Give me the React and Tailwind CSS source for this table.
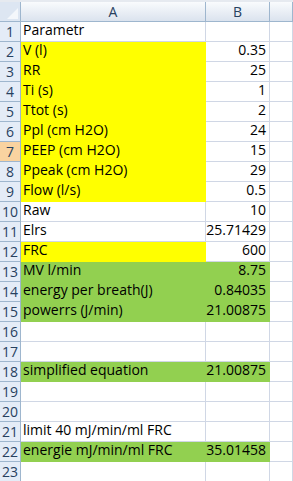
import React from "react";

const Y = "#ffff00";
const G = "#92d050";

const rows = [
  ["Parametr", "", null, null],
  ["V (l)", "0.35", Y, null],
  ["RR", "25", Y, null],
  ["Ti (s)", "1", Y, null],
  ["Ttot (s)", "2", Y, null],
  ["Ppl (cm H2O)", "24", Y, null],
  ["PEEP (cm H2O)", "15", Y, null],
  ["Ppeak (cm H2O)", "29", Y, null],
  ["Flow (l/s)", "0.5", Y, null],
  ["Raw", "10", null, null],
  ["Elrs", "25.71429", null, null],
  ["FRC", "600", Y, null],
  ["MV l/min", "8.75", G, G],
  ["energy per breath(J)", "0.84035", G, G],
  ["powerrs (J/min)", "21.00875", G, G],
  ["", "", null, null],
  ["", "", null, null],
  ["simplified equation", "21.00875", G, G],
  ["", "", null, null],
  ["", "", null, null],
  ["limit 40 mJ/min/ml FRC", "", null, null],
  ["energie mJ/min/ml FRC", "35.01458", G, G],
  ["", "", null, null],
];

function Cell({ text, fill, right, nextFill }) {
  const style = fill
    ? { backgroundColor: fill, borderColor: fill }
    : {};
  return (
    <div
      className={`h-[20px] border-r border-b border-[#d0d7e5] flex items-end pb-[1px] overflow-visible whitespace-nowrap ${
        right ? "justify-end pr-[3px]" : "pl-[2px]"
      }`}
      style={style}
    >
      {text}
    </div>
  );
}

export default function App() {
  return (
    <div
      className="w-[293px] h-[481px] overflow-hidden bg-white text-[14px] text-black"
      style={{ fontFamily: '"Open Sans", "Liberation Sans", sans-serif' }}
    >
      <div className="h-[2px] bg-[#e6eaf0]" />
      <div className="grid grid-cols-[21px_185px_64px_1fr]">
        {/* header */}
        <div className="h-[20px] bg-[#dde6f2] border-r border-b border-[#9eb6ce] relative">
          <svg className="absolute right-[2px] bottom-[2px]" width="11" height="11" viewBox="0 0 11 11">
            <polygon points="11,0 11,11 0,11" fill="#f4f7fb" />
          </svg>
        </div>
        {["A", "B", ""].map((l, i) => (
          <div
            key={i}
            className="h-[20px] bg-gradient-to-b from-[#f9fbfd] to-[#dbe3ee] border-r border-b border-[#9eb6ce] flex items-center justify-center text-[#27415f]"
          >
            {l}
          </div>
        ))}
        {rows.map(([a, b, fa, fb], i) => (
          <React.Fragment key={i}>
            <div
              className={`h-[20px] border-r border-b border-[#9eb6ce] flex items-center justify-center text-[#27415f] ${
                i === 6 ? "bg-[#f9d3a0]" : "bg-[#e4ecf7]"
              }`}
            >
              {i + 1}
            </div>
            <Cell text={a} fill={fa} />
            <Cell text={b} fill={fb} right />
            <Cell text="" />
          </React.Fragment>
        ))}
      </div>
    </div>
  );
}
